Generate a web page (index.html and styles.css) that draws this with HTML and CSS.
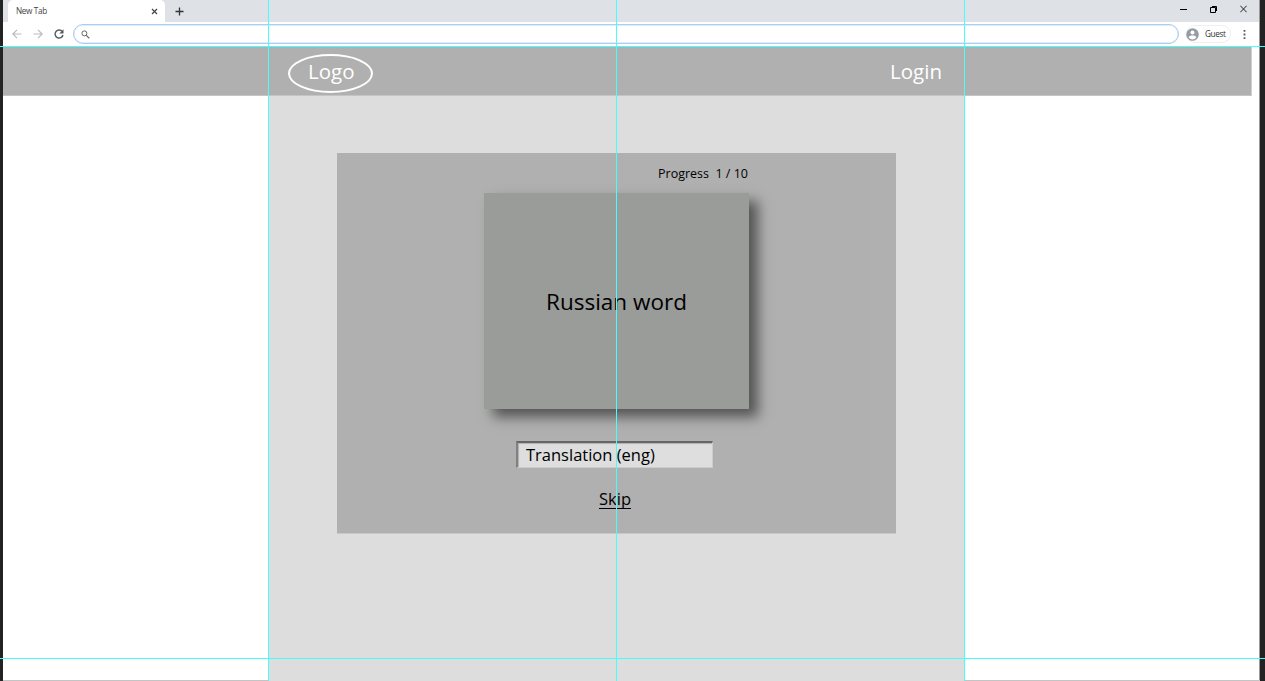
FILE: index.html
```html
<!DOCTYPE html>
<html lang="en">
<head>
<meta charset="utf-8">
<title>New Tab</title>
<link rel="stylesheet" href="styles.css">
</head>
<body>
<div class="browser">
  <div class="tabbar">
    <div class="tab"><span class="tab-title">New Tab</span>
      <svg class="tab-close" width="7" height="7" viewBox="0 0 7 7"><path d="M1 1l5 5M6 1l-5 5" stroke="#444" stroke-width="1.200"/></svg>
    </div>
    <svg class="tab-new" width="9" height="9" viewBox="0 0 9 9"><path d="M4.5 .5v8M.5 4.5h8" stroke="#333" stroke-width="1.3"/></svg>
    <div class="window-buttons">
      <svg width="7" height="9" viewBox="0 0 7 9"><path d="M0 4.5h7" stroke="#000"/></svg>
      <svg width="7" height="8" viewBox="0 0 7 8"><path d="M.5 2.5h5v5h-5zM2 1.500h4.5V6" fill="none" stroke="#000"/></svg>
      <svg width="7" height="8" viewBox="0 0 7 8"><path d="M.3 .7l6.4 6.6M6.7 .7L.3 7.3" stroke="#222" stroke-width="1"/></svg>
    </div>
  </div>
  <div class="toolbar">
    <svg class="nav-icon" width="10" height="10" viewBox="0 0 10 10"><path d="M9.5 5H1M5 .8L.8 5 5 9.200" fill="none" stroke="#b9bbbd" stroke-width="1.2"/></svg>
    <svg class="nav-icon" width="10" height="10" viewBox="0 0 10 10"><path d="M.5 5H9M5 .8L9.200 5 5 9.200" fill="none" stroke="#b9bbbd" stroke-width="1.2"/></svg>
    <svg class="nav-icon" width="10" height="10" viewBox="0 0 10 10"><path d="M8.300 2.600A4 4 0 1 0 9 6" fill="none" stroke="#555a5e" stroke-width="1.400"/><path d="M9.500 .3v4.200H5.300z" fill="#555a5e"/></svg>
    <div class="address">
      <svg width="9" height="9" viewBox="0 0 9 9"><circle cx="3.400" cy="3.400" r="2.500" fill="none" stroke="#666"/><path d="M5.300 5.300l3 3" stroke="#666" stroke-width="1.200"/></svg>
    </div>
    <div class="profile">
      <svg width="13" height="13" viewBox="0 0 13 13"><circle cx="6.500" cy="6.500" r="6.300" fill="#959ca3"/><circle cx="6.500" cy="4.600" r="2" fill="#fff"/><path d="M2.700 9.500C3.200 6.900 9.800 6.900 10.300 9.500 8.500 12 4.500 12 2.700 9.500z" fill="#fff"/></svg>
      <span>Guest</span>
    </div>
    <svg class="menu" width="3" height="9" viewBox="0 0 3 9"><path d="M.6 0h1.800v1.800H.6zM.6 3.600h1.800v1.800H.6zM.6 7.200h1.800V9H.6z" fill="#55595d"/></svg>
  </div>
  <header class="header">
    <div class="logo"><span>Logo</span></div>
    <a class="login">Login</a>
  </header>
  <main class="column">
    <section class="panel">
      <div class="progress">Progress&nbsp; 1 / 10</div>
      <div class="card"><span>Russian word</span></div>
      <div class="field"><span>Translation (eng)</span></div>
      <a class="skip"><span>Skip</span></a>
    </section>
  </main>
</div>
<i class="base-line base-left"></i><i class="base-line base-right"></i>
<i class="guide-h guide-top"></i>
<i class="guide-h guide-bottom"></i>
<i class="guide-v guide-left"></i>
<i class="guide-v guide-center"></i>
<i class="guide-v guide-right"></i>
</body>
</html>
```
FILE: styles.css
```css
* { box-sizing: border-box; }
body {
  position: relative;
  height: 681px;
  margin: 0;
  padding: 0 5px 0 3px;
  overflow: hidden;
  background: #232323;
  font-family: "Open Sans", "Noto Sans", sans-serif;
  color: #000;
}
svg { display: block; flex: none; }
span, a { white-space: nowrap; }
.browser {
  display: flex;
  flex-direction: column;
  height: 681px;
  border-right: 1px solid #999;
  background: #fff;
}
.tabbar { display: flex; height: 22px; background: #dee1e6; }
.tab {
  display: flex;
  align-items: center;
  justify-content: space-between;
  width: 157px;
  margin-left: 5px;
  padding: 0 7px 0 8px;
  border-radius: 5px 5px 0 0;
  background: #fff;
}
.tab-title { padding-bottom: 2px; font-size: 8.2px; letter-spacing: -.35px; color: #444; }
.tab-new { margin: 7px 0 0 10px; }
.window-buttons { display: flex; gap: 23px; margin: 5px 12px 0 auto; }
.toolbar { display: flex; align-items: center; height: 25px; padding: 0 13px 1px 9px; }
.nav-icon { margin-right: 11px; }
.address {
  display: flex;
  align-items: center;
  flex: 1;
  height: 20px;
  margin-left: -2px;
  padding-left: 7px;
  border: 1px solid #a9cdf5;
  box-shadow: inset 0 0 0 .5px #c5dcf5;
  border-radius: 10px;
}
.profile {
  display: flex;
  align-items: center;
  gap: 6px;
  width: 45px;
  height: 18px;
  margin: 0 12px 0 7px;
  border: 1px solid #eceef0;
  border-left: 0;
  border-radius: 9px;
  font-size: 8.2px;
  letter-spacing: -.35px;
  color: #333;
}
.profile span { padding-bottom: 2px; }
.header {
  display: flex;
  justify-content: space-between;
  width: 1249px;
  height: 49px;
  padding: 7px 309px 0 285px;
  border-right: 1px solid #d0d0d0;
  border-bottom: 1px solid #c4c4c4;
  background: #b0b0b0;
  font-size: 20.5px;
  line-height: 34px;
  color: #fff;
}
.logo {
  width: 85px;
  height: 39px;
  padding-left: 18px;
  border: 2px solid #fff;
  border-radius: 50%;
  line-height: 30px;
}
.column {
  flex: 1;
  width: 696px;
  margin-left: 265px;
  padding-top: 57px;
  background: #ddd;
}
.panel {
  display: flex;
  flex-direction: column;
  width: 559px;
  height: 381px;
  margin-left: 69px;
  border-bottom: 1px solid #c8c8c8;
  background: #b0b0b0;
}
.progress { height: 40px; padding-left: 321px; font-size: 12.5px; line-height: 41px; white-space: nowrap; }
.card {
  display: flex;
  align-items: center;
  justify-content: center;
  width: 265px;
  height: 216px;
  margin-left: 147px;
  background: #9a9c9a;
  box-shadow: 9px 8px 12px rgba(0, 0, 0, .52);
  font-size: 22.5px;
}
.field {
  width: 197px;
  height: 27px;
  margin: 32px 0 0 179px;
  padding-left: 8px;
  border-top: 2px solid #666;
  border-left: 2px solid #808080;
  border-right: 1px solid #ccc;
  border-bottom: 1px solid #ccc;
  background: #dedede;
  box-shadow: inset 1px 1px 1px #b0b0b0;
  font-size: 16.5px;
  line-height: 24px;
}
.skip {
  width: 32px;
  height: 22px;
  margin: 19px 0 0 262px;
  border-bottom: 1px solid #000;
  font-size: 16.5px;
  line-height: 24px;
}
.guide-h, .guide-v, .base-line { position: absolute; }
.guide-h { left: 0; width: 100%; height: 1px; background: #45fefe; }
.guide-v { top: 0; width: 1px; height: 100%; background: #45fefe; }
.guide-top { top: 46px; }
.guide-bottom { top: 658px; }
.guide-left { left: 268px; }
.guide-center { left: 616px; }
.guide-right { left: 964px; }
.base-line { top: 680px; height: 1px; background: #c4c4c4; }
.base-left { left: 3px; width: 265px; }
.base-right { left: 965px; width: 295px; }
```
